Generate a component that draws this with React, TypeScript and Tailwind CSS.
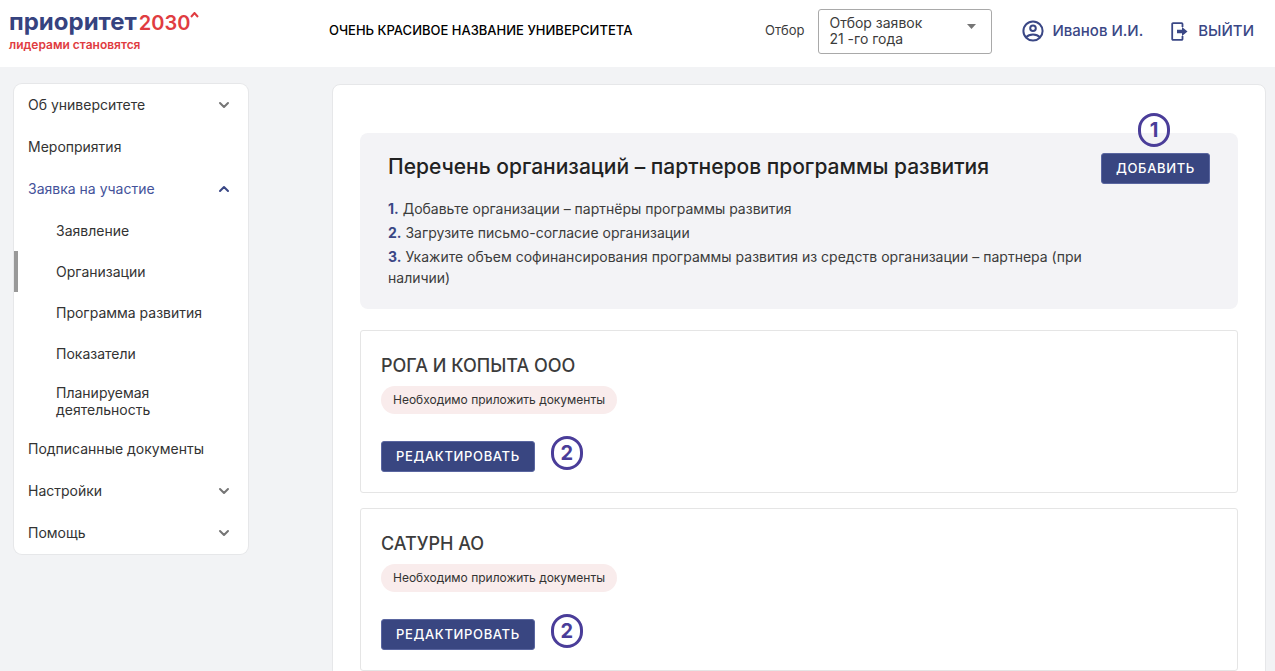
import React from 'react';
import { ChevronDown, ChevronUp } from 'lucide-react';

type NavItem = {
  label: string;
  arrow?: 'down' | 'up';
  children?: { label: string; active?: boolean }[];
};

const navItems: NavItem[] = [
  { label: 'Об университете', arrow: 'down' },
  { label: 'Мероприятия' },
  {
    label: 'Заявка на участие',
    arrow: 'up',
    children: [
      { label: 'Заявление' },
      { label: 'Организации', active: true },
      { label: 'Программа развития' },
      { label: 'Показатели' },
      { label: 'Планируемая деятельность' },
    ],
  },
  { label: 'Подписанные документы' },
  { label: 'Настройки', arrow: 'down' },
  { label: 'Помощь', arrow: 'down' },
];

const steps = [
  'Добавьте организации – партнёры программы развития',
  'Загрузите письмо-согласие организации',
  'Укажите объем софинансирования программы развития из средств организации – партнера (при наличии)',
];

const organizations = ['РОГА И КОПЫТА ООО', 'САТУРН АО'];

const Logo = () => (
  <a href="#" className="flex flex-col w-[192px] shrink-0">
    <span className="flex items-baseline text-2xl leading-6 font-bold text-[#36437f]">
      приоритет
      <span className="ml-0.5 text-xl leading-6 font-semibold text-[#e03c41]">2030</span>
      <svg width="9" height="6" viewBox="0 0 9 6" className="self-start mt-0.5 shrink-0">
        <path d="M1 5 4.5 1 8 5" fill="none" stroke="#e03c41" strokeWidth="2" />
      </svg>
    </span>
    <span className="mt-0.5 text-xs leading-4 font-semibold text-[#e03c41]">лидерами становятся</span>
  </a>
);

const UserIcon = () => (
  <svg width="22" height="22" viewBox="0 0 22 22" fill="none" stroke="#3a4785" strokeWidth="2">
    <circle cx="11" cy="11" r="9.6" />
    <circle cx="11" cy="8.2" r="2.8" />
    <path d="M4 17.4c1.8-2 4.2-2.9 7-2.9s5.2.9 7 2.9" />
  </svg>
);

const ExitIcon = () => (
  <svg width="17" height="19" viewBox="0 0 17 19" fill="none">
    <path
      d="M11.5 5V2a.8.8 0 0 0-.8-.8H2a.8.8 0 0 0-.8.8v15a.8.8 0 0 0 .8.8h8.7a.8.8 0 0 0 .8-.8v-3"
      stroke="#3a4785"
      strokeWidth="1.8"
    />
    <path d="M6 7.7h5V5l5.5 4.5L11 14v-2.7H6z" fill="#3a4785" />
  </svg>
);

const Header = () => (
  <header className="h-[67px] bg-white flex items-center pl-[9px] pr-[21px] pb-[5px]">
    <Logo />
    <div className="flex-1 pl-32 text-[13px] font-medium text-black">
      ОЧЕНЬ КРАСИВОЕ НАЗВАНИЕ УНИВЕРСИТЕТА
    </div>
    <label htmlFor="selection" className="text-[13px] text-[#3c3c3c] mr-3.5">
      Отбор
    </label>
    <div className="relative">
      <select
        id="selection"
        className="appearance-none block w-[174px] h-[45px] pl-2.5 pr-16 whitespace-normal rounded-[3px] border border-[#a9a9a9] bg-white text-sm leading-4 text-[#3c3c3c]"
      >
        <option>Отбор заявок 21 -го года</option>
      </select>
      <svg
        width="9"
        height="5"
        viewBox="0 0 9 5"
        className="absolute right-4 top-[15px] pointer-events-none"
      >
        <path d="M0 0h9L4.5 5z" fill="#757575" />
      </svg>
    </div>
    <a href="#" className="flex items-center gap-2 ml-[30px] text-[15px] font-medium text-[#3a4785]">
      <UserIcon />
      Иванов И.И.
    </a>
    <button type="button" className="flex items-center gap-2.5 ml-7 text-[15px] font-medium text-[#3a4785]">
      <ExitIcon />
      ВЫЙТИ
    </button>
  </header>
);

const Sidebar = () => (
  <nav className="w-[234px] shrink-0 bg-white rounded-lg ring-1 ring-[#e6e7e9] text-sm text-[#333333]">
    <ul>
      {navItems.map((item) => (
        <li key={item.label}>
          <a
            href="#"
            className={`h-[42px] pl-3.5 pr-4 flex items-center justify-between ${
              item.arrow === 'up' ? 'text-[#44529a]' : ''
            }`}
          >
            {item.label}
            {item.arrow === 'down' && <ChevronDown className="w-4 h-4 text-[#757575]" strokeWidth={3} />}
            {item.arrow === 'up' && <ChevronUp className="w-4 h-4 text-[#3a4785]" strokeWidth={3} />}
          </a>
          {item.children && (
            <ul>
              {item.children.map((child) => (
                <li key={child.label}>
                  <a
                    href="#"
                    className={`min-h-[41px] py-2.5 pl-[38px] pr-10 flex items-center leading-[17px] border-l-4 ${
                      child.active ? 'border-[#999999]' : 'border-transparent'
                    }`}
                  >
                    {child.label}
                  </a>
                </li>
              ))}
            </ul>
          )}
        </li>
      ))}
    </ul>
  </nav>
);

const Marker = ({ value }: { value: number }) => (
  <span className="w-8 h-[34px] rounded-full border-[3px] border-[#4a3d99] flex items-center justify-center text-xl font-bold text-[#4a3d99]">
    {value}
  </span>
);

const ActionButton = ({ children }: { children: React.ReactNode }) => (
  <button
    type="button"
    className="h-[31px] px-3.5 rounded-[3px] border border-[#5a66a0] bg-[#394681] text-[13px] font-medium tracking-wider text-white"
  >
    {children}
  </button>
);

const Intro = () => (
  <section className="relative flex items-start justify-between rounded-lg bg-[#f3f3f6] px-7 pt-5 pb-[21px]">
    <div className="w-[704px]">
      <h1 className="text-[21px] leading-7 font-medium text-[#222222]">
        Перечень организаций – партнеров программы развития
      </h1>
      <ol className="mt-[17px] space-y-[3px] text-sm leading-[21px] text-[#3c3c3c]">
        {steps.map((step, i) => (
          <li key={step}>
            <b className="text-[#3a4785]">{i + 1}.</b> {step}
          </li>
        ))}
      </ol>
    </div>
    <ActionButton>ДОБАВИТЬ</ActionButton>
    <div className="absolute right-[68px] -top-5">
      <Marker value={1} />
    </div>
  </section>
);

const OrganizationCard = ({ name }: { name: string }) => (
  <article className="rounded-[3px] border border-[#e5e5e5] px-5 pt-[21px] pb-5">
    <h2 className="text-lg leading-7 font-medium text-[#3c3c3c]">{name}</h2>
    <p className="mt-1.5 w-fit h-7 px-3 flex items-center rounded-full bg-[#f9ecec] text-xs text-[#333333]">
      Необходимо приложить документы
    </p>
    <div className="mt-[22px] flex items-start gap-4">
      <div className="pt-[5px]">
        <ActionButton>РЕДАКТИРОВАТЬ</ActionButton>
      </div>
      <Marker value={2} />
    </div>
  </article>
);

export default function App() {
  return (
    <div className="min-h-screen bg-[#f2f3f5] font-['Inter','Liberation_Sans',sans-serif]">
      <Header />
      <div className="flex items-start gap-[84px] pl-3.5 pr-[9px] pt-[17px]">
        <Sidebar />
        <main className="flex-1 bg-white rounded-lg border border-[#e6e7e9] px-[27px] pt-12 pb-7">
          <Intro />
          <div className="mt-[21px] space-y-[15px]">
            {organizations.map((name) => (
              <OrganizationCard key={name} name={name} />
            ))}
          </div>
        </main>
      </div>
    </div>
  );
}
